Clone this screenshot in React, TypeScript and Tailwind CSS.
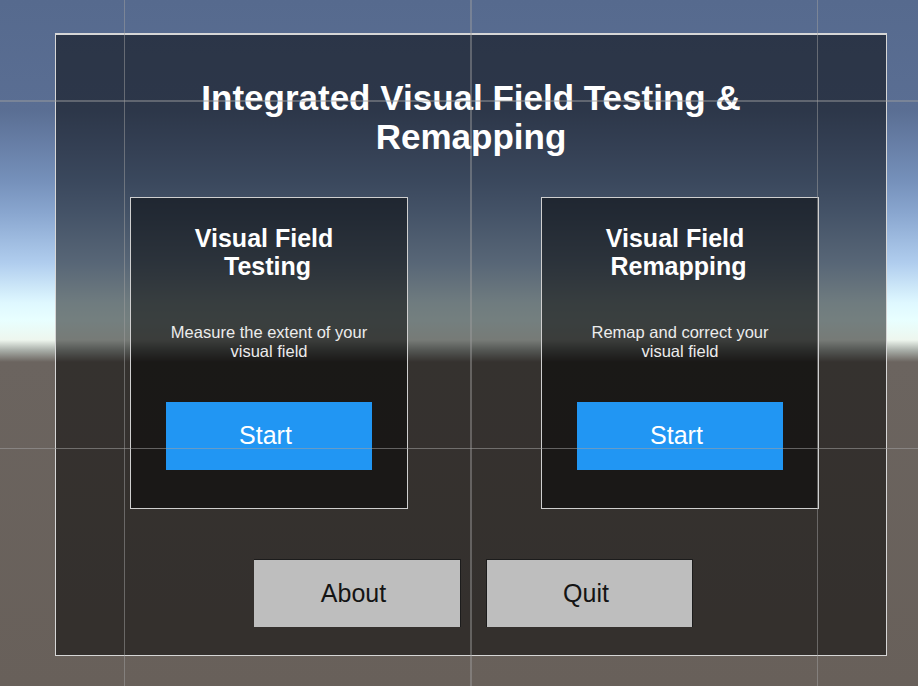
import React from "react";

function Card({ title1, title2, desc1, desc2 }: { title1: string; title2: string; desc1: string; desc2: string }) {
  return (
    <div className="w-[278px] h-[312px] border border-[#cfcfcf] bg-black/50 flex flex-col items-center">
      <h2 className="mt-[26px] pr-[3px] text-center text-white font-bold text-[25px] leading-[28px]">
        {title1}
        {"\u00a0"}
        <br />
        {title2}
      </h2>
      <p className="mt-[43px] text-center text-[#ececec] text-[16.5px] leading-[19px]">
        {desc1}
        <br />
        {desc2}
      </p>
      <button className="mt-[41px] w-[206px] h-[68px] bg-[#2196f3] text-white text-[25px] flex items-center justify-center pr-[7px]">
        Start
      </button>
    </div>
  );
}

export default function App() {
  return (
    <div className="relative w-[918px] h-[686px] overflow-hidden pt-[33px] pl-[55px] font-['Liberation_Sans',Arial,sans-serif] bg-[linear-gradient(to_bottom,#566a8e_0px,#5a6e93_110px,#7590ba_180px,#89a6cf_213px,#b0cdee_263px,#dff8ff_303px,#e8ffff_320px,#eef6ee_340px,#aab0aa_350px,#6b645f_362px,#68605a_686px)]">
      <div className="w-[832px] h-[623px] border border-t-2 border-[#d6d6d6] bg-black/50 flex flex-col">
        <h1 className="mt-[43px] text-center text-white font-bold text-[35px] leading-[39px]">
          Integrated Visual Field Testing &amp;
          <br />
          Remapping
        </h1>
        <div className="mt-[41px] flex pl-[74px] gap-[133px]">
          <Card title1="Visual Field" title2="Testing" desc1="Measure the extent of your" desc2="visual field" />
          <Card title1="Visual Field" title2="Remapping" desc1="Remap and correct your" desc2="visual field" />
        </div>
        <div className="mt-[50px] flex pl-[198px] gap-[25px]">
          <button className="w-[207px] h-[68px] bg-[#bebebe] text-[#141414] text-[25px] border-t border-r border-[#1c1c1c] flex items-center justify-center pr-[7px]">
            About
          </button>
          <button className="w-[207px] h-[68px] bg-[#bebebe] text-[#141414] text-[25px] border-t border-x border-[#1c1c1c] flex items-center justify-center pr-[7px]">
            Quit
          </button>
        </div>
      </div>

      {/* scene-view grid lines overlay */}
      <div className="pointer-events-none absolute top-0 left-[124px] w-px h-full bg-[#a0a0a0]/50" />
      <div className="pointer-events-none absolute top-0 left-[470px] w-[2px] h-full bg-[#a0a0a0]/45" />
      <div className="pointer-events-none absolute top-0 left-[817px] w-px h-full bg-[#a0a0a0]/50" />
      <div className="pointer-events-none absolute left-0 top-[100px] h-[2px] w-full bg-[#a0a0a0]/45" />
      <div className="pointer-events-none absolute left-0 top-[448px] h-px w-full bg-[#a0a0a0]/55" />
    </div>
  );
}
